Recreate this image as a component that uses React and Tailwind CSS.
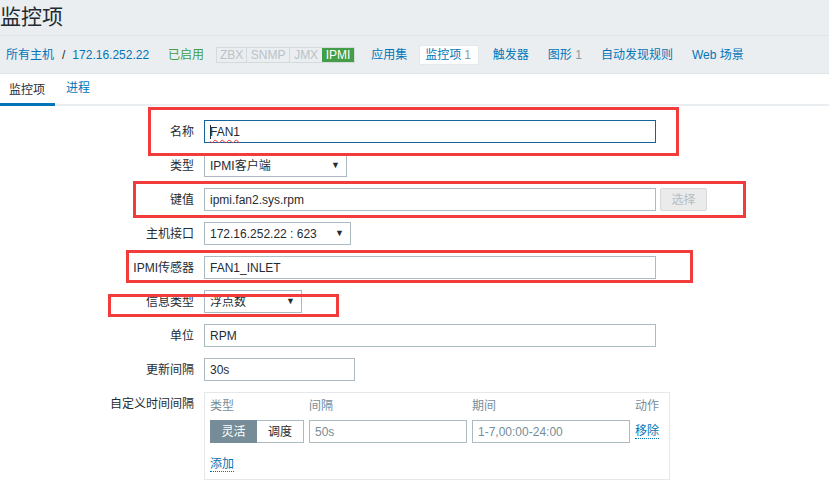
import React from "react";

function Arrow() {
  return <span className="text-[9px] leading-none text-[#1f2c33]">▼</span>;
}

function Select({ w, children }) {
  return (
    <div className={`h-[23px] ${w} border border-[#acbbc2] bg-white flex items-center justify-between pl-[5px] pr-[6px]`}>
      <span>{children}</span>
      <Arrow />
    </div>
  );
}

function Input({ w = "w-[452px]", children, cls = "border-[#acbbc2]" }) {
  return (
    <div className={`h-[23px] ${w} border ${cls} bg-white flex items-center pl-[5px]`}>
      {children}
    </div>
  );
}

function Label({ children }) {
  return <div className="h-[23px] flex items-center justify-end whitespace-nowrap">{children}</div>;
}

export default function App() {
  return (
    <div className="relative w-[829px] h-[483px] overflow-hidden bg-white text-[12px] text-[#1f2c33] font-['Liberation_Sans','Noto_Sans_CJK_SC',sans-serif]">
      <div className="bg-[#ebeef1]">
        <div className="h-[36px] border-b border-[#dfe4e7] flex items-center">
          <h1 className="text-[21px] leading-none -mt-[3px]">监控项</h1>
        </div>
        <nav className="h-[38px] border-b border-[#dfe4e7] flex items-center pl-[6px] text-[#0275b8] whitespace-nowrap">
          <span>所有主机</span>
          <span className="ml-[8px] text-[#1f2c33]">/</span>
          <span className="ml-[7px]">172.16.252.22</span>
          <span className="ml-[19px] text-[#429e47]">已启用</span>
          <div className="ml-[12px] flex h-[16px] border border-[#d5dadd] text-[#b9c3c8] text-[12px] leading-none">
            <span className="w-[30px] flex items-center justify-center border-r border-[#d5dadd]">ZBX</span>
            <span className="w-[43px] flex items-center justify-center border-r border-[#d5dadd]">SNMP</span>
            <span className="w-[32px] flex items-center justify-center">JMX</span>
            <span className="w-[32px] flex items-center justify-center bg-[#429e47] text-white">IPMI</span>
          </div>
          <span className="ml-[16px]">应用集</span>
          <span className="ml-[12px] h-[20px] pl-[5px] pr-[7px] bg-white border border-[#e4e8eb] rounded-[2px] flex items-center">
            监控项 <span className="ml-[3px] text-[#8a9aa3]">1</span>
          </span>
          <span className="ml-[14px]">触发器</span>
          <span className="ml-[19px]">图形 <span className="text-[#8a9aa3]">1</span></span>
          <span className="ml-[19px]">自动发现规则</span>
          <span className="ml-[19px]">Web 场景</span>
        </nav>
      </div>

      <div className="h-[32px] flex items-end border-b-2 border-[#ebeef1]">
        <div className="w-[55px] h-[32px] flex items-center justify-center border-b-[3px] border-[#0275b8] -mb-[2px] pt-[2px]">
          <span className="ml-[-1px]">监控项</span>
        </div>
        <div className="h-[32px] flex items-center ml-[11px] text-[#0275b8] pb-[1px]">进程</div>
      </div>

      <div className="pt-[14px] grid grid-cols-[194px_1fr] gap-x-[10px] gap-y-[11px]">
        <Label>名称</Label>
        <Input cls="border-[#15659b]">
          <span className="w-[1px] h-[14px] bg-[#1f2c33] mr-[-1px]"></span>
          <span className="underline decoration-wavy decoration-[#e33] decoration-1 underline-offset-[3px]">FAN1</span>
        </Input>

        <Label>类型</Label>
        <Select w="w-[143px]">IPMI客户端</Select>

        <Label>键值</Label>
        <div className="flex items-center gap-[4px]">
          <Input>ipmi.fan2.sys.rpm</Input>
          <div className="h-[23px] w-[47px] bg-[#ebebeb] border border-[#d3d9dc] rounded-[2px] flex items-center justify-center text-[#b4bec3]">选择</div>
        </div>

        <Label>主机接口</Label>
        <Select w="w-[147px]">172.16.252.22 : 623</Select>

        <Label>IPMI传感器</Label>
        <Input>FAN1_INLET</Input>

        <Label>信息类型</Label>
        <Select w="w-[98px]">浮点数</Select>

        <Label>单位</Label>
        <Input>RPM</Input>

        <Label>更新间隔</Label>
        <Input w="w-[151px]">30s</Input>

        <Label>自定义时间间隔</Label>
        <div className="w-[466px] h-[88px] border border-[#e4e8eb] pl-[5px] pt-[6px]">
          <div className="flex leading-[14px] text-[#768d99]">
            <span className="w-[99px]">类型</span>
            <span className="w-[163px]">间隔</span>
            <span className="w-[163px]">期间</span>
            <span className="w-[24px] text-right">动作</span>
          </div>
          <div className="flex items-center mt-[7px] h-[23px]">
            <div className="flex h-[23px] w-[94px]">
              <span className="w-[47px] bg-[#768d99] text-white flex items-center justify-center">灵活</span>
              <span className="w-[47px] border border-[#acbbc2] border-l-0 bg-white flex items-center justify-center">调度</span>
            </div>
            <div className="ml-[5px] h-[23px] w-[158px] border border-[#acbbc2] flex items-center pl-[5px] text-[#768d99]">50s</div>
            <div className="ml-[5px] h-[23px] w-[158px] border border-[#acbbc2] flex items-center pl-[5px] text-[#768d99]">1-7,00:00-24:00</div>
            <span className="ml-[5px] text-[#0275b8] border-b border-dotted border-[#0275b8] leading-[14px]">移除</span>
          </div>
          <div className="mt-[12px]">
            <span className="text-[#0275b8] border-b border-dotted border-[#0275b8] leading-[14px] inline-block">添加</span>
          </div>
        </div>
      </div>

      <div className="absolute left-[148px] top-[107px] w-[531px] h-[49px] border-[3px] border-[#f23b3b]"></div>
      <div className="absolute left-[133px] top-[181px] w-[613px] h-[37px] border-[3px] border-[#f23b3b]"></div>
      <div className="absolute left-[126px] top-[250px] w-[567px] h-[33px] border-[3px] border-[#f23b3b]"></div>
      <div className="absolute left-[108px] top-[294px] w-[231px] h-[23px] border-[3px] border-[#f23b3b]"></div>
    </div>
  );
}
